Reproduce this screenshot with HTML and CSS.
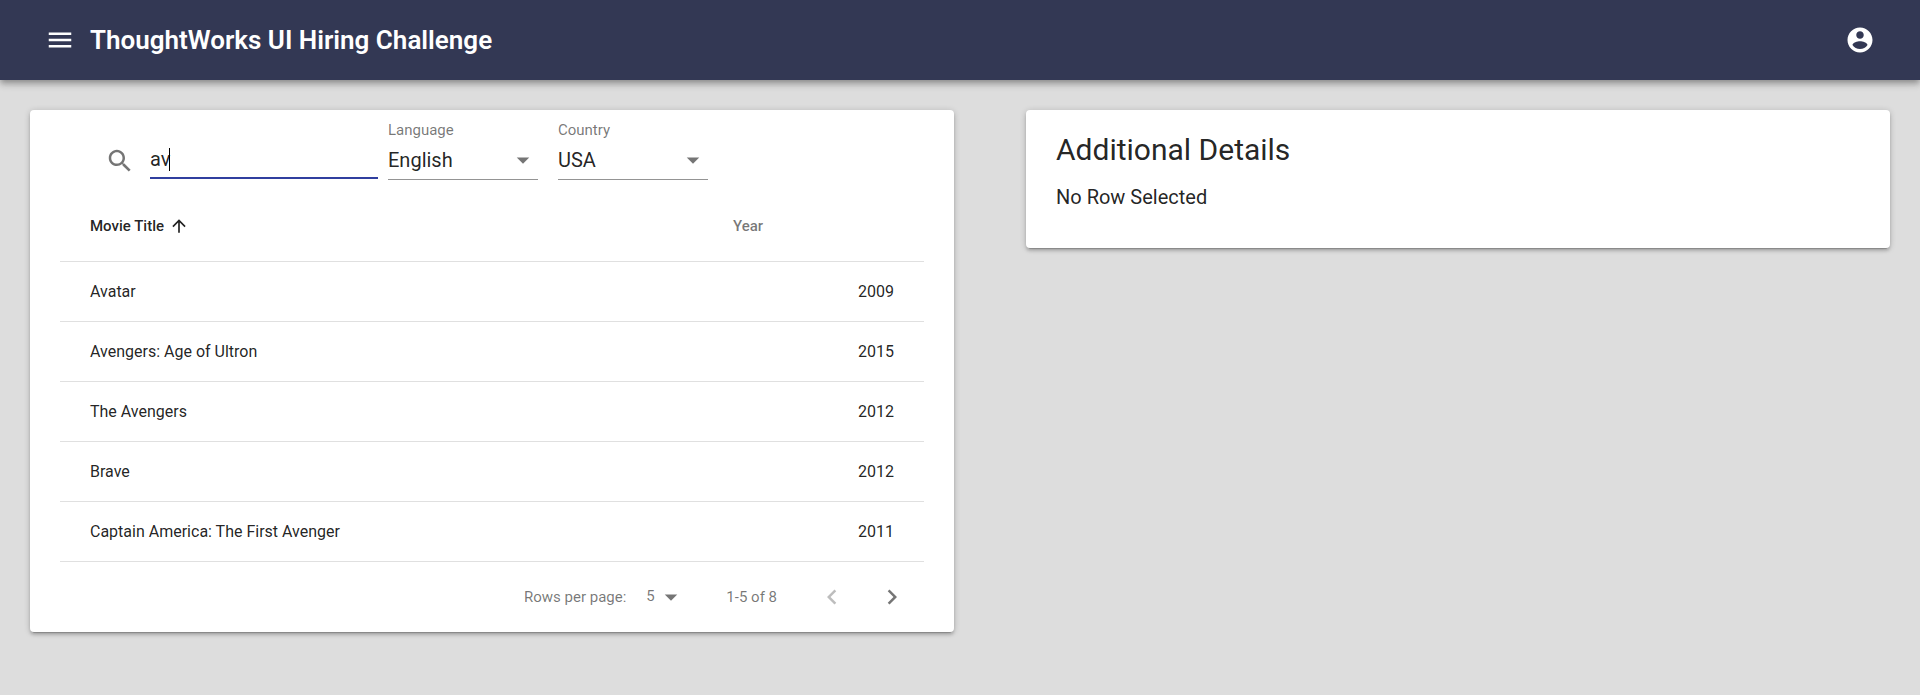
FILE: index.html
```html
<!DOCTYPE html>
<html lang="en">
<head>
<meta charset="utf-8">
<title>ThoughtWorks UI Hiring Challenge</title>
<link rel="stylesheet" href="styles.css">
</head>
<body>
<header class="app-bar">
  <button class="icon-button" type="button" aria-label="Menu">
    <svg class="icon" viewBox="0 0 24 24"><path d="M3 18h18v-2H3v2zm0-5h18v-2H3v2zm0-7v2h18V6H3z"/></svg>
  </button>
  <h1 class="app-title">ThoughtWorks UI Hiring Challenge</h1>
  <button class="icon-button" type="button" aria-label="Account">
    <svg class="icon" viewBox="0 0 24 24"><path d="M12 2C6.48 2 2 6.48 2 12s4.48 10 10 10 10-4.48 10-10S17.52 2 12 2zm0 3c1.66 0 3 1.34 3 3s-1.34 3-3 3-3-1.34-3-3 1.34-3 3-3zm0 14.2c-2.5 0-4.71-1.28-6-3.22.03-1.99 4-3.08 6-3.08 1.99 0 5.97 1.09 6 3.08-1.29 1.94-3.5 3.22-6 3.22z"/></svg>
  </button>
</header>
<main class="content">
  <section class="card movies">
    <form class="filters">
      <label class="search-label" for="search" aria-label="Search">
        <svg class="icon" viewBox="0 0 24 24"><path d="M15.5 14h-.79l-.28-.27C15.41 12.59 16 11.11 16 9.5 16 5.91 13.09 3 9.5 3S3 5.91 3 9.5 5.91 16 9.5 16c1.61 0 3.09-.59 4.23-1.57l.27.28v.79l5 4.99L20.49 19l-4.99-5zm-6 0C7.01 14 5 11.99 5 9.5S7.01 5 9.5 5 14 7.01 14 9.5 11.99 14 9.5 14z"/></svg>
      </label>
      <div class="search-box">
        <input class="search-input" id="search" type="text" value="av" autocomplete="off">
        <span class="caret"></span>
      </div>
      <div class="field">
        <label class="field-label" for="language">Language</label>
        <div class="select-box">
          <select class="select" id="language"><option>English</option></select>
          <svg class="icon drop" viewBox="0 0 24 24"><path d="M7 10l5 5 5-5z"/></svg>
        </div>
      </div>
      <div class="field">
        <label class="field-label" for="country">Country</label>
        <div class="select-box">
          <select class="select" id="country"><option>USA</option></select>
          <svg class="icon drop" viewBox="0 0 24 24"><path d="M7 10l5 5 5-5z"/></svg>
        </div>
      </div>
    </form>
    <table class="table">
      <thead>
        <tr>
          <th class="head-title" scope="col" aria-sort="ascending">
            <button class="sort active" type="button">Movie Title
              <svg class="sort-icon" viewBox="0 0 24 24"><path d="M4 12l1.41 1.41L11 7.83V20h2V7.83l5.58 5.59L20 12l-8-8-8 8z"/></svg>
            </button>
          </th>
          <th class="head-year" scope="col"><button class="sort" type="button">Year</button></th>
        </tr>
      </thead>
      <tbody>
        <tr><td>Avatar</td><td class="year">2009</td></tr>
        <tr><td>Avengers: Age of Ultron</td><td class="year">2015</td></tr>
        <tr><td>The Avengers</td><td class="year">2012</td></tr>
        <tr><td>Brave</td><td class="year">2012</td></tr>
        <tr><td>Captain America: The First Avenger</td><td class="year">2011</td></tr>
      </tbody>
    </table>
    <footer class="pagination">
      <label for="rows">Rows per page:</label>
      <div class="select-box rows-box">
        <select class="select rows" id="rows"><option>5</option></select>
        <svg class="icon drop" viewBox="0 0 24 24"><path d="M7 10l5 5 5-5z"/></svg>
      </div>
      <span class="range">1-5 of 8</span>
      <button class="page-button" type="button" aria-label="Previous page" disabled>
        <svg class="icon" viewBox="0 0 24 24"><path d="M15.41 7.41L14 6l-6 6 6 6 1.41-1.41L10.83 12z"/></svg>
      </button>
      <button class="page-button" type="button" aria-label="Next page">
        <svg class="icon" viewBox="0 0 24 24"><path d="M10 6L8.59 7.41 13.17 12l-4.58 4.59L10 18l6-6z"/></svg>
      </button>
    </footer>
  </section>
  <section class="card details">
    <h2 class="details-title">Additional Details</h2>
    <p class="details-text">No Row Selected</p>
  </section>
</main>
</body>
</html>
```
FILE: styles.css
```css
* {
  box-sizing: border-box;
}

body {
  margin: 0;
  min-height: 100vh;
  background: #dddddd;
  color: rgba(0, 0, 0, 0.87);
  font-family: Roboto, "Liberation Sans", sans-serif;
  font-size: 16px;
}

button,
input,
select {
  margin: 0;
  padding: 0;
  border: 0;
  border-radius: 0;
  background: none;
  color: inherit;
  font: inherit;
  outline: none;
}

.icon {
  display: block;
  width: 30px;
  height: 30px;
  fill: currentColor;
}

.app-bar {
  position: relative;
  display: flex;
  align-items: center;
  gap: 15px;
  height: 80px;
  padding: 0 45px;
  background: #333854;
  color: #fff;
  box-shadow: 0 3px 5px -1px rgba(0, 0, 0, 0.2), 0 5px 6px rgba(0, 0, 0, 0.14), 0 1px 12px rgba(0, 0, 0, 0.12);
}

.app-title {
  flex: 1;
  margin: 0;
  font-size: 26px;
  font-weight: 600;
  line-height: 40px;
}

.content {
  display: grid;
  grid-template-columns: 77fr 72fr;
  align-items: start;
  gap: 72px;
  padding: 30px;
}

.card {
  border-radius: 4px;
  background: #fff;
  box-shadow: 0 1px 6px rgba(0, 0, 0, 0.2), 0 3px 3px rgba(0, 0, 0, 0.14), 0 4px 1px -3px rgba(0, 0, 0, 0.2);
}

.movies {
  padding: 0 30px;
}

.filters {
  display: flex;
  align-items: flex-end;
  height: 81px;
  padding: 0 0 11px 45px;
}

.search-label {
  padding-bottom: 4px;
  margin-right: 15px;
  color: rgba(0, 0, 0, 0.54);
}

.search-box {
  position: relative;
  width: 228px;
  margin-right: 10px;
  margin-bottom: 1px;
}

.search-input {
  display: block;
  width: 100%;
  height: 40px;
  padding-top: 2px;
  border-bottom: 2px solid #303f9f;
  font-size: 20px;
  caret-color: transparent;
}

.caret {
  position: absolute;
  top: 9px;
  left: 19px;
  width: 1px;
  height: 23px;
  background: #000;
}

.field {
  width: 150px;
  margin-right: 20px;
}

.field-label {
  display: block;
  color: rgba(0, 0, 0, 0.54);
  font-size: 15px;
  line-height: 20px;
}

.select-box {
  display: grid;
  align-items: center;
}

.select {
  grid-area: 1 / 1;
  width: 100%;
  height: 40px;
  padding-top: 1px;
  border-bottom: 1px solid rgba(0, 0, 0, 0.42);
  font-size: 20px;
  appearance: none;
}

.drop {
  grid-area: 1 / 1;
  justify-self: end;
  color: rgba(0, 0, 0, 0.54);
  pointer-events: none;
}

.table {
  width: 100%;
  border-collapse: separate;
  border-spacing: 0;
}

.table th,
.table td {
  height: 60px;
  padding: 0 30px;
  border-bottom: 1px solid #e0e0e0;
  text-align: left;
  font-weight: 400;
}

.table th {
  height: 71px;
  color: rgba(0, 0, 0, 0.54);
  font-size: 15px;
}

.head-year {
  width: 221px;
}

.sort {
  display: flex;
  align-items: center;
  gap: 5px;
  font-weight: 500;
}

.sort.active {
  color: rgba(0, 0, 0, 0.87);
}

.sort-icon {
  width: 20px;
  height: 20px;
  fill: currentColor;
}

.table .year {
  text-align: right;
}

.pagination {
  display: flex;
  align-items: center;
  justify-content: flex-end;
  height: 70px;
  padding-right: 2px;
  color: rgba(0, 0, 0, 0.54);
  font-size: 15px;
}

.rows-box {
  width: 40px;
  margin: 0 40px 0 20px;
}

.select.rows {
  height: 30px;
  padding: 0 0 3px;
  border-bottom: 0;
  font-size: 15px;
}

.range {
  margin-right: 25px;
}

.page-button {
  display: grid;
  place-items: center;
  width: 60px;
  height: 60px;
}

.page-button:disabled {
  color: rgba(0, 0, 0, 0.26);
}

.details {
  padding: 20px 30px 36px;
}

.details-title {
  margin: 0 0 12px;
  font-size: 30px;
  font-weight: 400;
  line-height: 40px;
}

.details-text {
  margin: 0;
  font-size: 20px;
  line-height: 30px;
}
```
